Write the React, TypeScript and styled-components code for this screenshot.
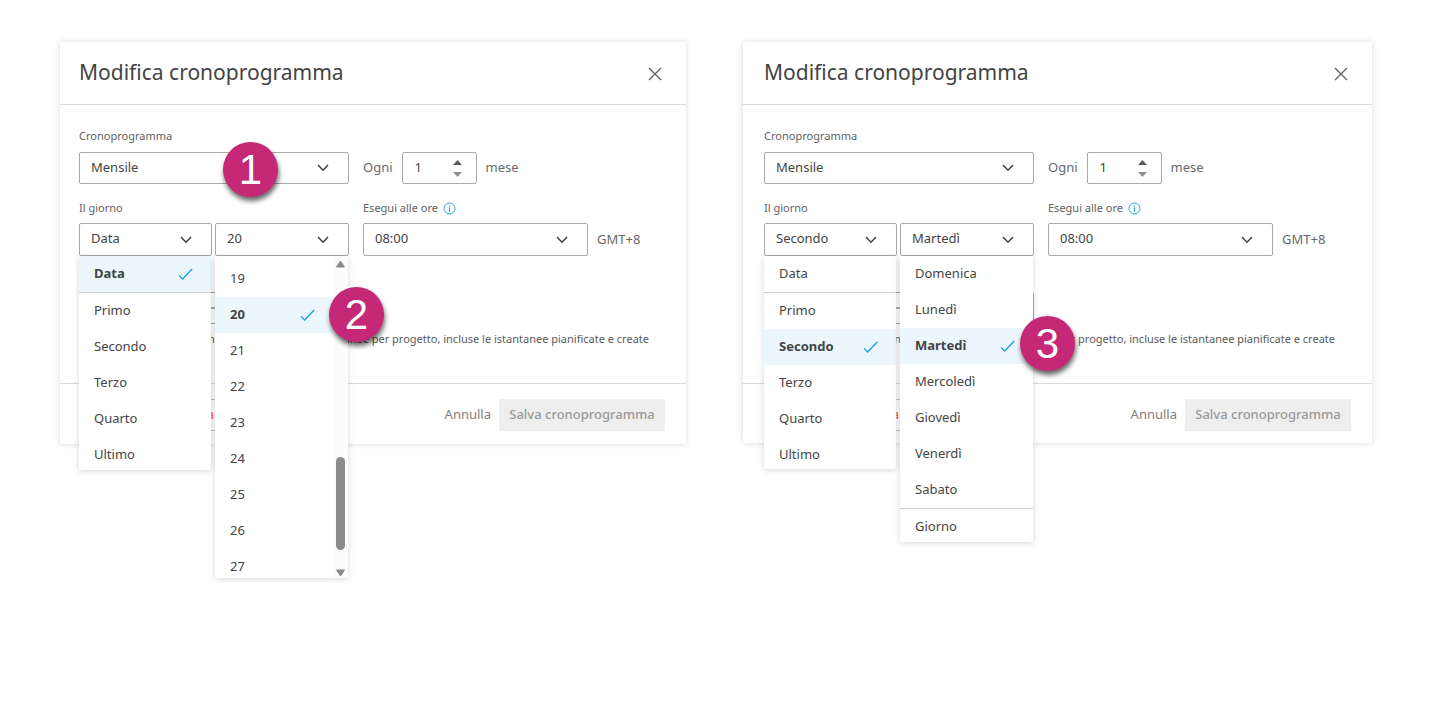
import React from "react";
import styled, { createGlobalStyle, css } from "styled-components";

const Global = createGlobalStyle`
  *, *::before, *::after { box-sizing: border-box; }
  body {
    margin: 0;
    background: #fff;
    color: #444;
    font-family: "Noto Sans", "Open Sans", sans-serif;
    font-size: 13px;
    line-height: 20px;
  }
  button, input, select { font: inherit; color: inherit; margin: 0; }
`;

const Page = styled.main`
  display: grid;
  grid-template-columns: 626fr 629fr;
  column-gap: 57px;
  align-items: start;
  padding: 42px 63px 140px 60px;
`;

const Dialog = styled.section<{ $inset: number }>`
  --inset: ${(p) => p.$inset}px;
  position: relative;
  min-width: 0;
  background: #fff;
  box-shadow: 0 0 6px rgba(0, 0, 0, 0.16);
`;

const Header = styled.header`
  display: flex;
  align-items: center;
  justify-content: space-between;
  height: 63px;
  padding: 0 20px 0 var(--inset);
  border-bottom: 1px solid #d9d9d9;
`;

const Title = styled.h1`
  margin: 0;
  padding-bottom: 2px;
  font-size: 21px;
  line-height: 30px;
  font-weight: 400;
`;

const IconButton = styled.button`
  display: flex;
  padding: 5px 4px 4px;
  border: 0;
  background: none;
  color: #5f5f5f;
`;

const Form = styled.form`
  display: grid;
  grid-template-columns: 270px 1fr;
  column-gap: 14px;
  row-gap: 14px;
  height: 278px;
  align-content: start;
  padding: 21px 21px 0 var(--inset);
`;

const Field = styled.div`
  min-width: 0;
`;

const FieldLabel = styled.label`
  display: flex;
  align-items: center;
  gap: 5px;
  height: 20px;
  margin-bottom: 6px;
  font-size: 11px;
  color: #5f5f5f;
`;

const DayField = styled(Field)`
  label { margin-bottom: 5px; }
`;

const Line = styled.div<{ $gap: number }>`
  display: flex;
  align-items: center;
  gap: ${(p) => p.$gap}px;
`;

const EveryLine = styled(Line)`
  align-self: end;
  color: #6a6a6a;
`;

const Unit = styled.span`
  padding-bottom: 2px;
  color: #6a6a6a;
`;

const EveryLabel = styled.label`
  padding-bottom: 2px;
`;

const SelectBox = styled.div<{ $width: number; $tall?: boolean }>`
  position: relative;
  flex: none;
  width: ${(p) => p.$width}px;
  height: ${(p) => (p.$tall ? 33 : 32)}px;
`;

const NativeSelect = styled.select`
  appearance: none;
  width: 100%;
  height: 100%;
  padding: 0 40px 3px 11px;
  border: 1px solid #a9a9a9;
  border-radius: 2px;
  background: #fff;
`;

const ChevronHolder = styled.span<{ $right: number }>`
  position: absolute;
  top: 50%;
  right: ${(p) => p.$right}px;
  display: flex;
  transform: translateY(-50%);
  pointer-events: none;
`;

const Stepper = styled.div`
  display: flex;
  align-items: center;
  width: 75px;
  height: 32px;
  padding: 0 14px 0 12px;
  border: 1px solid #a9a9a9;
  border-radius: 2px;
`;

const NumberInput = styled.input`
  flex: 1;
  width: 0;
  padding: 0 0 2px;
  border: 0;
  background: none;
  color: #444;
  appearance: textfield;
  &::-webkit-inner-spin-button { appearance: none; }
`;

const StepButtons = styled.span`
  display: flex;
  flex-direction: column;
  gap: 7px;
`;

const StepButton = styled.button`
  display: flex;
  padding: 0;
  border: 0;
  background: none;
`;

const Menu = styled.ul<{ $height: number; $scrolled?: boolean }>`
  position: absolute;
  z-index: 1;
  top: 100%;
  left: 0;
  width: calc(100% - 1px);
  height: ${(p) => p.$height}px;
  margin: 0;
  padding: ${(p) => (p.$scrolled ? "5px 15px 0 0" : "0")};
  overflow: hidden;
  list-style: none;
  background: #fff;
  box-shadow: 0 1px 6px rgba(0, 0, 0, 0.16);
  border-radius: 2px;
`;

const Option = styled.li<{ $selected?: boolean; $line?: boolean }>`
  display: flex;
  align-items: center;
  justify-content: space-between;
  height: 36px;
  padding: 0 18px 0 15px;
  ${(p) =>
    p.$selected &&
    css`
      background: #ebf7fd;
      font-weight: 700;
    `}
  ${(p) =>
    p.$line &&
    css`
      height: 37px;
      border-bottom: 1px solid #cfcfcf;
    `}
`;

const OptionText = styled.span`
  padding-bottom: 3px;
`;

const ScrollTrack = styled.span`
  position: absolute;
  top: 0;
  right: 0;
  bottom: 0;
  display: flex;
  flex-direction: column;
  align-items: center;
  width: 15px;
  padding: 4px 0 1px;
  background: #fcfcfc;
`;

const ScrollThumb = styled.span`
  width: 9px;
  height: 93px;
  margin-top: auto;
  margin-bottom: 19px;
  border-radius: 5px;
  background: #8b8b8b;
`;

const Covered = styled.div`
  grid-column: 1 / -1;
`;

const NameInput = styled.input`
  display: block;
  width: 270px;
  height: 32px;
  margin-top: 22px;
  border: 1px solid #a9a9a9;
  border-radius: 2px;
  background: linear-gradient(#b0b0b0, #b0b0b0) center / 100% 2px no-repeat;
`;

const Note = styled.p`
  margin: 5px 16px 0 0;
  overflow: hidden;
  font-size: 11px;
  text-align: right;
  white-space: nowrap;
  color: #5a5a5a;
`;

const Footer = styled.footer<{ $height: number }>`
  display: flex;
  align-items: flex-start;
  height: ${(p) => p.$height}px;
  padding: 15px 21px 0 var(--inset);
  border-top: 1px solid #d9d9d9;
`;

const ActionButton = styled.button<{ $kind: "danger" | "plain" | "primary" }>`
  height: 32px;
  padding: 0 7px 2px;
  border: 1px solid transparent;
  background: none;
  color: #808080;
  ${(p) =>
    p.$kind === "danger" &&
    css`
      padding: 0 13px 2px;
      margin-right: auto;
      border-color: #c8c8c8;
      color: #e06666;
    `}
  ${(p) =>
    p.$kind === "primary" &&
    css`
      width: 166px;
      padding: 0 0 2px;
      background: #eee;
      color: #9a9a9a;
      font-weight: 500;
    `}
`;

const Badge = styled.span<{ $x: number; $y: number }>`
  position: absolute;
  z-index: 2;
  left: ${(p) => p.$x}px;
  top: ${(p) => p.$y}px;
  display: flex;
  align-items: center;
  justify-content: center;
  width: 55px;
  height: 55px;
  border-radius: 50%;
  background: #c62878;
  box-shadow: 1px 4px 5px rgba(0, 0, 0, 0.6);
  color: #fff;
  font-family: "Liberation Sans", Arial, sans-serif;
  font-size: 42px;
  line-height: 55px;
`;

const Close = () => (
  <svg width="14" height="14" viewBox="0 0 14 14" fill="none" stroke="currentColor" strokeWidth="1.3">
    <path d="M1 1l12 12M13 1L1 13" />
  </svg>
);

const Chevron = () => (
  <svg width="12" height="8" viewBox="0 0 12 8" fill="none" stroke="#3c3c3c" strokeWidth="1.4">
    <path d="M1 1l5 5.3L11 1" />
  </svg>
);

const Tick = () => (
  <svg width="15" height="12" viewBox="0 0 15 12" fill="none" stroke="#1a9ee0" strokeWidth="1.3">
    <path d="M1 7.4l3.6 3.6L14.2 1" />
  </svg>
);

const Info = () => (
  <svg width="13" height="13" viewBox="0 0 13 13" fill="none" stroke="#1a9ee0">
    <circle cx="6.5" cy="6.5" r="5.5" />
    <path d="M6.5 5.5v4.2M6.5 3.2v1.2" strokeWidth="1.1" />
  </svg>
);

const Triangle = ({ down, color }: { down?: boolean; color: string }) => (
  <svg width="9" height="5" viewBox="0 0 9 5" fill={color}>
    <path d={down ? "M0 0h9L4.5 5z" : "M0 5h9L4.5 0z"} />
  </svg>
);

const ScrollArrow = ({ down }: { down?: boolean }) => (
  <svg width="11" height="8" viewBox="0 0 11 8" fill="#8b8b8b" stroke="#8b8b8b" strokeLinejoin="round">
    <path d={down ? "M1.5 1h8L5.5 7z" : "M1.5 7h8L5.5 1z"} />
  </svg>
);

type DropProps = {
  id: string;
  value: string;
  width: number;
  tall?: boolean;
  label?: string;
  children?: React.ReactNode;
};

const Drop = ({ id, value, width, tall, label, children }: DropProps) => (
  <SelectBox $width={width} $tall={tall}>
    <NativeSelect id={id} aria-label={label} defaultValue={value}>
      <option>{value}</option>
    </NativeSelect>
    <ChevronHolder $right={20}>
      <Chevron />
    </ChevronHolder>
    {children}
  </SelectBox>
);

type ListProps = {
  items: string[];
  selected: string;
  lineAfter?: string;
  height: number;
  scroll?: boolean;
};

const List = ({ items, selected, lineAfter, height, scroll }: ListProps) => (
  <Menu role="listbox" $height={height} $scrolled={scroll}>
    {items.map((item) => (
      <Option
        key={item}
        role="option"
        aria-selected={item === selected}
        $selected={item === selected}
        $line={item === lineAfter}
      >
        <OptionText>{item}</OptionText>
        {item === selected && <Tick />}
      </Option>
    ))}
    {scroll && (
      <ScrollTrack aria-hidden="true">
        <ScrollArrow />
        <ScrollThumb />
        <ScrollArrow down />
      </ScrollTrack>
    )}
  </Menu>
);

const ordinals = ["Data", "Primo", "Secondo", "Terzo", "Quarto", "Ultimo"];
const dates = ["19", "20", "21", "22", "23", "24", "25", "26", "27"];
const weekdays = ["Domenica", "Lunedì", "Martedì", "Mercoledì", "Giovedì", "Venerdì", "Sabato", "Giorno"];

type ScheduleProps = {
  id: string;
  inset: number;
  footer: number;
  kind: string;
  day: string;
  kindMenu: React.ReactNode;
  dayMenu: React.ReactNode;
  children: React.ReactNode;
};

const Schedule = ({ id, inset, footer, kind, day, kindMenu, dayMenu, children }: ScheduleProps) => (
  <Dialog $inset={inset} role="dialog" aria-labelledby={`${id}-title`}>
    <Header>
      <Title id={`${id}-title`}>Modifica cronoprogramma</Title>
      <IconButton type="button" aria-label="Chiudi">
        <Close />
      </IconButton>
    </Header>
    <Form>
      <Field>
        <FieldLabel htmlFor={`${id}-period`}>Cronoprogramma</FieldLabel>
        <Drop id={`${id}-period`} value="Mensile" width={270} />
      </Field>
      <EveryLine $gap={9}>
        <EveryLabel htmlFor={`${id}-every`}>Ogni</EveryLabel>
        <Stepper>
          <NumberInput id={`${id}-every`} type="number" defaultValue={1} />
          <StepButtons>
            <StepButton type="button" aria-label="Aumenta">
              <Triangle color="#5a5a5a" />
            </StepButton>
            <StepButton type="button" aria-label="Diminuisci">
              <Triangle down color="#8f8f8f" />
            </StepButton>
          </StepButtons>
        </Stepper>
        <Unit>mese</Unit>
      </EveryLine>
      <DayField>
        <FieldLabel htmlFor={`${id}-kind`}>Il giorno</FieldLabel>
        <Line $gap={3}>
          <Drop id={`${id}-kind`} value={kind} width={133} tall>
            {kindMenu}
          </Drop>
          <Drop id={`${id}-day`} label="Giorno" value={day} width={134} tall>
            {dayMenu}
          </Drop>
        </Line>
      </DayField>
      <DayField>
        <FieldLabel htmlFor={`${id}-time`}>
          Esegui alle ore <Info />
        </FieldLabel>
        <Line $gap={9}>
          <Drop id={`${id}-time`} value="08:00" width={225} tall />
          <Unit>GMT+8</Unit>
        </Line>
      </DayField>
      <Covered>
        <NameInput aria-label="Nome" />
        <Note>
          È previsto un limite massimo di 100 istantanee per progetto, incluse le istantanee pianificate e create
        </Note>
      </Covered>
    </Form>
    <Footer $height={footer}>
      <ActionButton type="button" $kind="danger">
        Elimina programma
      </ActionButton>
      <ActionButton type="button" $kind="plain">
        Annulla
      </ActionButton>
      <ActionButton type="button" $kind="primary" disabled>
        Salva cronoprogramma
      </ActionButton>
    </Footer>
    {children}
  </Dialog>
);

export default function App() {
  return (
    <>
      <Global />
      <Page>
        <Schedule
          id="date"
          inset={19}
          footer={61}
          kind="Data"
          day="20"
          kindMenu={<List items={ordinals} selected="Data" lineAfter="Data" height={214} />}
          dayMenu={<List items={dates} selected="20" height={322} scroll />}
        >
          <Badge $x={163} $y={100}>1</Badge>
          <Badge $x={269} $y={245}>2</Badge>
        </Schedule>
        <Schedule
          id="weekday"
          inset={21}
          footer={60}
          kind="Secondo"
          day="Martedì"
          kindMenu={<List items={ordinals} selected="Secondo" lineAfter="Data" height={213} />}
          dayMenu={<List items={weekdays} selected="Martedì" lineAfter="Sabato" height={286} />}
        >
          <Badge $x={277} $y={274}>3</Badge>
        </Schedule>
      </Page>
    </>
  );
}
